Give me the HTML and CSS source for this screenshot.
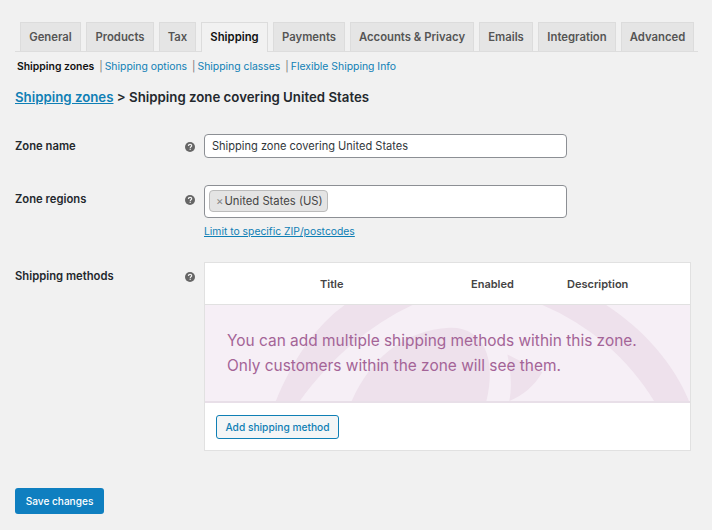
FILE: index.html
```html
<!DOCTYPE html>
<html lang="en">
<head>
<meta charset="utf-8">
<title>Shipping zone</title>
<link rel="stylesheet" href="styles.css">
</head>
<body>
<nav class="tabs">
  <a class="tab tab-general">General</a>
  <a class="tab tab-products">Products</a>
  <a class="tab tab-tax">Tax</a>
  <a class="tab tab-active">Shipping</a>
  <a class="tab tab-payments">Payments</a>
  <a class="tab tab-accounts">Accounts &amp; Privacy</a>
  <a class="tab tab-emails">Emails</a>
  <a class="tab tab-integration">Integration</a>
  <a class="tab tab-advanced">Advanced</a>
</nav>
<ul class="subnav">
  <li class="current">Shipping zones</li>
  <li><span class="sep">|</span><a>Shipping options</a></li>
  <li><span class="sep">|</span><a>Shipping classes</a></li>
  <li><span class="sep">|</span><a>Flexible Shipping Info</a></li>
</ul>
<h2 class="title"><a>Shipping zones</a> &gt; Shipping zone covering United States</h2>
<div class="row row-name">
  <div class="label">Zone name</div>
  <svg class="help" viewBox="0 0 10 10"><circle cx="5" cy="5" r="5" fill="#666"/><path d="M3.4 3.9c0-1 .7-1.6 1.7-1.6s1.6.6 1.6 1.4c0 1.2-1.4 1.1-1.4 2.2" fill="none" stroke="#f1f1f1" stroke-width="1.2"/><rect x="4.6" y="6.7" width="1.2" height="1.2" fill="#f1f1f1"/></svg>
  <div class="field"><div class="input">Shipping zone covering United States</div></div>
</div>
<div class="row row-regions">
  <div class="label">Zone regions</div>
  <svg class="help" viewBox="0 0 10 10"><circle cx="5" cy="5" r="5" fill="#666"/><path d="M3.4 3.9c0-1 .7-1.6 1.7-1.6s1.6.6 1.6 1.4c0 1.2-1.4 1.1-1.4 2.2" fill="none" stroke="#f1f1f1" stroke-width="1.2"/><rect x="4.6" y="6.7" width="1.2" height="1.2" fill="#f1f1f1"/></svg>
  <div class="field">
    <div class="select"><span class="chip"><span class="chip-x">×</span>United States (US)</span></div>
    <a class="limit">Limit to specific ZIP/postcodes</a>
  </div>
</div>
<div class="row row-methods">
  <div class="label">Shipping methods</div>
  <svg class="help" viewBox="0 0 10 10"><circle cx="5" cy="5" r="5" fill="#666"/><path d="M3.4 3.9c0-1 .7-1.6 1.7-1.6s1.6.6 1.6 1.4c0 1.2-1.4 1.1-1.4 2.2" fill="none" stroke="#f1f1f1" stroke-width="1.2"/><rect x="4.6" y="6.7" width="1.2" height="1.2" fill="#f1f1f1"/></svg>
  <div class="methods">
    <div class="thead">
      <span class="th-title">Title</span>
      <span class="th-enabled">Enabled</span>
      <span class="th-desc">Description</span>
    </div>
    <div class="blank">
      <svg class="watermark" viewBox="0 0 486 97" preserveAspectRatio="none">
        <path d="M71 97C88 55 112 20 140 0H208C165 20 125 55 95 97Z" fill="#eee1ec"/>
        <path d="M147 97C165 55 200 25 245 23C280 22 292 55 282 97Z" fill="#eee1ec"/>
        <path d="M305 97C308 80 306 65 303 50L338 68C330 82 318 92 305 97Z" fill="#eee1ec"/>
        <path d="M338 0H402C440 25 470 60 485 97H450C425 55 385 20 338 0Z" fill="#eee1ec"/>
      </svg>
      <p class="blank-text">You can add multiple shipping methods within this zone.<br>Only customers within the zone will see them.</p>
    </div>
    <div class="tfoot"><button class="btn-outline">Add shipping method</button></div>
  </div>
</div>
<button class="btn-save">Save changes</button>
</body>
</html>
```
FILE: styles.css
```css
* { box-sizing: border-box; }
html, body { margin: 0; padding: 0; }
body {
  width: 712px;
  height: 530px;
  overflow: hidden;
  background: #f1f1f1;
  font-family: Inter, "Noto Sans", "Liberation Sans", sans-serif;
  color: #23282d;
  font-size: 11px;
  padding: 22px 0 0 15px;
}
a { color: #0f7fb5; }
.tabs {
  display: flex;
  width: 683px;
  height: 30px;
  padding-left: 5px;
  border-bottom: 1px solid #ddd;
}
.tab {
  height: 29px;
  margin-right: 5px;
  border: 1px solid #dcdcdc;
  border-bottom: 0;
  background: #e5e5e5;
  color: #555;
  font-size: 11.3px;
  font-weight: 600;
  line-height: 29px;
  text-align: center;
}
.tab-general { width: 61px; }
.tab-products { width: 68px; }
.tab-tax { width: 37px; }
.tab-active { width: 67px; height: 30px; background: #f1f1f1; color: #111; margin-right: 5px; }
.tab-payments { width: 72px; }
.tab-accounts { width: 124px; }
.tab-emails { width: 54px; }
.tab-integration { width: 78px; }
.tab-advanced { width: 73px; margin-right: 0; }
.subnav {
  display: flex;
  margin: 8px 0 0 2px;
  padding: 0;
  list-style: none;
  font-size: 10.4px;
  line-height: 14px;
  height: 14px;
  color: #0f7fb5;
}
.subnav li { margin-right: 5px; white-space: nowrap; }
.subnav .current { color: #111; font-weight: 600; margin-right: 5px; }
.sep { color: #777; margin-right: 2px; }
.title {
  margin: 13px 0 0;
  font-size: 13.25px;
  font-weight: 600;
  line-height: 20px;
  color: #23282d;
}
.title a { text-decoration: underline; }
.row { display: flex; align-items: flex-start; }
.label {
  width: 170px;
  font-size: 11.25px;
  font-weight: 600;
  line-height: 16px;
}
.help { width: 10px; height: 10px; margin-top: 4px; margin-right: 9px; }
.row-name { margin-top: 27px; }
.row-name .label { margin-top: 4px; }
.row-name .help { margin-top: 8px; }
.field { width: 363px; }
.input {
  height: 24px;
  background: #fff;
  border: 1px solid #8c8f94;
  border-radius: 4px;
  padding-left: 7px;
  font-size: 11.05px;
  line-height: 22px;
  color: #32373c;
}
.row-regions { margin-top: 27px; }
.row-regions .label { margin-top: 6px; }
.row-regions .help { margin-top: 10px; }
.select {
  height: 33px;
  background: #fff;
  border: 1px solid #8c8f94;
  border-radius: 4px;
  padding: 4px;
}
.chip {
  display: inline-block;
  height: 22px;
  padding: 0 4px 0 6px;
  background: #e4e4e4;
  border: 1px solid #bbb;
  border-radius: 4px;
  font-size: 11.25px;
  line-height: 20px;
  color: #444;
}
.chip-x { color: #888; margin-right: 1px; }
.limit {
  display: block;
  margin-top: 6px;
  font-size: 10.35px;
  line-height: 14px;
  text-decoration: underline;
}
.row-methods { margin-top: 24px; }
.row-methods .label { margin-top: 6px; }
.row-methods .help { margin-top: 10px; }
.methods {
  width: 487px;
  background: #fff;
  border: 1px solid #e1e1e1;
}
.thead {
  position: relative;
  height: 42px;
  border-bottom: 1px solid #e1e1e1;
  font-size: 11px;
  font-weight: 600;
  color: #444;
}
.thead span { position: absolute; top: 14px; line-height: 15px; }
.th-title { left: 115px; }
.th-enabled { left: 266px; }
.th-desc { left: 362px; }
.blank {
  position: relative;
  height: 98px;
  background: #f6eff6;
  border-bottom: 2px solid #e8dfe8;
  overflow: hidden;
}
.watermark { position: absolute; inset: 0; width: 100%; height: 100%; }
.blank-text {
  position: relative;
  margin: 0;
  padding: 23px 0 0 22px;
  font-size: 15.45px;
  line-height: 25px;
  color: #a46497;
}
.tfoot { height: 47px; padding: 12px 11px; }
.btn-outline {
  display: block;
  height: 24px;
  width: 123px;
  padding: 0;
  background: #f3f5f6;
  border: 1px solid #0f7fb5;
  border-radius: 3px;
  font: 500 10.2px/22px Inter, "Noto Sans", sans-serif;
  color: #0f7fb5;
}
.btn-save {
  display: block;
  margin-top: 37px;
  width: 89px;
  height: 26px;
  padding: 0;
  background: #0f7fc0;
  border: 0;
  border-radius: 3px;
  font: 500 10.1px/26px Inter, "Noto Sans", sans-serif;
  color: #fff;
}
```
